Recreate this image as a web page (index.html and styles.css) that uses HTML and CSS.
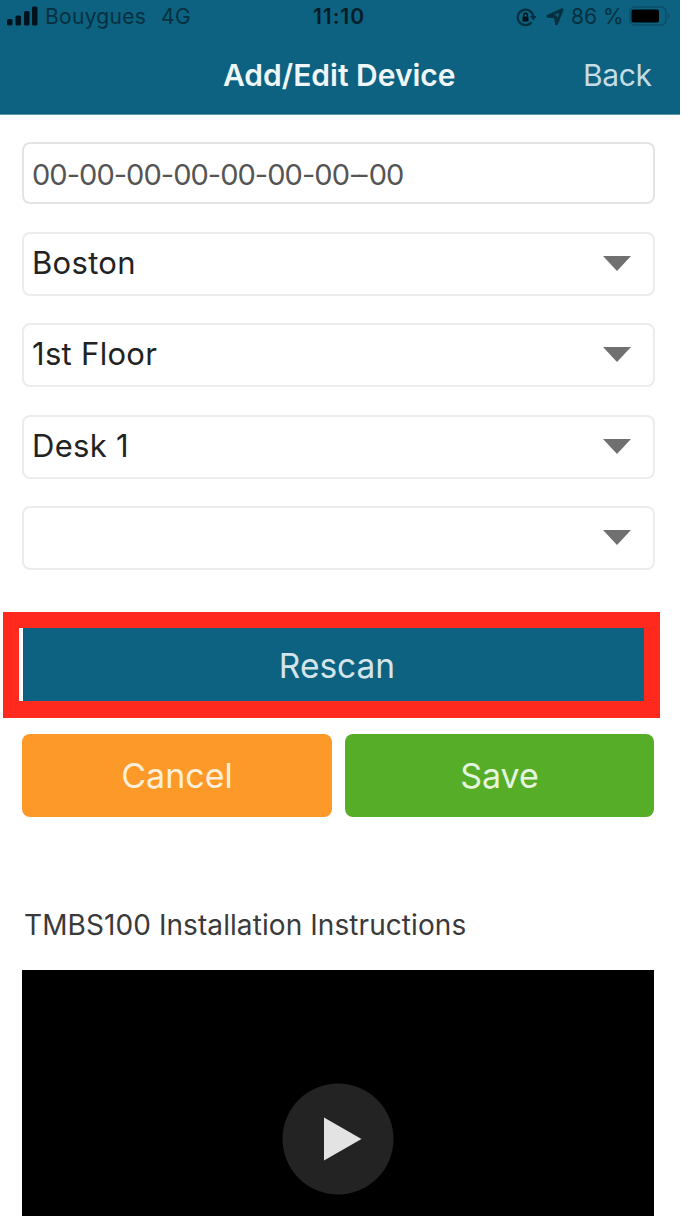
FILE: index.html
```
<!DOCTYPE html>
<html lang="en">
<head>
<meta charset="utf-8">
<title>Add/Edit Device</title>
<link rel="stylesheet" href="styles.css">
</head>
<body>
<div class="screen">
  <header class="header">
    <div class="status">
      <div class="status-left">
        <svg class="signal" width="32" height="20" viewBox="0 0 32 20"><rect x="0" y="13" width="5.5" height="6.500" rx="1.500"/><rect x="8.500" y="9.500" width="5.500" height="10" rx="1.500"/><rect x="17" y="5" width="5.500" height="14.500" rx="1.500"/><rect x="25" y="0.500" width="5.500" height="19" rx="1.500"/></svg>
        <span class="carrier">Bouygues</span>
        <span class="network">4G</span>
      </div>
      <span class="clock">11:10</span>
      <div class="status-right">
        <svg class="lock" width="21" height="20" viewBox="0 0 21 20"><path d="M15.600 15.300A7.800 7.800 0 1 1 17.300 9.500" fill="none" stroke="#06303f" stroke-width="2.200"/><path d="M14 9h6.500l-3.200 4.500z" fill="#06303f"/><path d="M6.500 9.500h6v5h-6z" fill="#021219"/><path d="M7.700 9.500V8a1.800 1.800 0 0 1 3.600 0v1.500" fill="none" stroke="#021219" stroke-width="1.400"/></svg>
        <svg class="arrow" width="18" height="18" viewBox="0 0 18 18"><path d="M2 8.200L16 1.800 10.500 15.800 9.500 8.700z" fill="none" stroke="#06303f" stroke-width="3" stroke-linejoin="round"/></svg>
        <span class="percent">86 %</span>
        <svg class="battery" width="43" height="20" viewBox="0 0 43 20"><rect x="1" y="1" width="36" height="18" rx="5" fill="none" stroke="#0a4f68" stroke-width="1.600"/><rect x="2.500" y="3.500" width="27.500" height="13" rx="2" fill="#000"/><path d="M39 7q3 3 0 6z" fill="#0a4a61"/></svg>
      </div>
    </div>
    <div class="navbar">
      <h1 class="title">Add/Edit Device</h1>
      <a class="back">Back</a>
    </div>
  </header>
  <main class="content">
    <div class="fields">
      <div class="field field-id"><span class="mac">00-00-00-00-00-00-00<span class="tight">-</span>-00</span></div>
      <div class="field"><span>Boston</span><svg class="caret" width="28" height="15" viewBox="0 0 28 15"><path d="M0 0h28L14 15z"/></svg></div>
      <div class="field"><span>1st Floor</span><svg class="caret" width="28" height="15" viewBox="0 0 28 15"><path d="M0 0h28L14 15z"/></svg></div>
      <div class="field"><span>Desk 1</span><svg class="caret" width="28" height="15" viewBox="0 0 28 15"><path d="M0 0h28L14 15z"/></svg></div>
      <div class="field"><span></span><svg class="caret" width="28" height="15" viewBox="0 0 28 15"><path d="M0 0h28L14 15z"/></svg></div>
    </div>
    <div class="highlight"><div class="button rescan"><span>Rescan</span></div></div>
    <div class="actions">
      <div class="button cancel"><span>Cancel</span></div>
      <div class="button save"><span>Save</span></div>
    </div>
    <h2 class="subtitle">TMBS100 Installation Instructions</h2>
    <div class="video">
      <svg class="play" width="112" height="112" viewBox="0 0 112 112"><circle cx="56" cy="56" r="55.500" fill="#232323"/><path d="M42 34.500L79.500 56 42 77.500z" fill="#e3e3e3"/></svg>
    </div>
  </main>
</div>
</body>
</html>
```

FILE: styles.css
```
* { box-sizing: border-box; }
body { margin: 0; background: #fff; font-family: Inter, "Liberation Sans", sans-serif; color: #222; }
svg { display: block; flex: none; }
.screen { width: 682px; height: 1222px; overflow: hidden; }
.header { width: 680px; height: 115px; background: #0c6280; border-bottom: 1px solid #5f98ab; }
.status { display: grid; grid-template-columns: 300px 78px 302px; height: 34px; align-items: center; font-size: 21px; line-height: 34px; color: #06303f; white-space: nowrap; }
.status-left, .status-right { display: flex; align-items: center; }
.status-left { padding-left: 7px; }
.signal { margin-top: -3px; margin-right: 6px; fill: #00131c; }
.carrier { width: 116px; letter-spacing: 0.3px; }
.network { letter-spacing: 0.5px; }
.clock { color: #031d28; font-weight: 600; text-align: center; letter-spacing: 1px; }
.status-right { padding-left: 138px; }
.lock { margin-right: 9px; }
.arrow { margin-right: 7px; }
.percent { width: 58px; }
.battery { margin-top: -2px; }
.navbar { display: grid; grid-template-columns: 223px 360px 97px; align-items: center; height: 81px; color: #eef6f8; white-space: nowrap; }
.title { grid-column: 2; margin: 0; font-size: 30px; line-height: 80px; font-weight: 600; }
.back { font-size: 30px; line-height: 80px; color: #c5dce4; letter-spacing: -0.4px; }
.content { padding-left: 22px; }
.fields { display: grid; grid-template-rows: 62px repeat(4, 64px); row-gap: 27.500px; width: 633px; padding-top: 27px; }
.field { display: flex; align-items: center; justify-content: space-between; padding: 0 22px 1px 8px; border: 2.500px solid #ececec; border-radius: 8px; font-size: 31px; line-height: 58px; letter-spacing: 0.3px; white-space: nowrap; }
.field > span { margin-top: -1px; }
.field-id { border-color: #e4e4e4; color: #555; }
.field > .mac { margin-top: 5px; font-size: 29px; letter-spacing: -0.960px; font-feature-settings: "calt" 0; }
.mac > .tight { letter-spacing: -6px; }
.caret { fill: #707070; }
.highlight { width: 657px; height: 106px; margin: 42px 0 0 -19px; padding-left: 4px; border: 16px solid #ff2a1d; border-bottom-width: 17px; background: #fff; }
.button { display: flex; align-items: center; justify-content: center; font-size: 34px; line-height: 40px; white-space: nowrap; }
.rescan { height: 73px; padding: 2px 0 0 7px; font-size: 33.500px; color: #d3e4ea; background: #0c6280; }
.actions { display: grid; grid-template-columns: 310px 309px; column-gap: 13px; margin-top: 16px; }
.actions .button { height: 83px; border-radius: 8px; }
.cancel { background: #fd9928; color: #ffeed8; }
.save { background: #56ad28; color: #e5f4df; }
.subtitle { margin: 88px 0 25px 2px; font-size: 28px; line-height: 40px; font-weight: 400; color: #3a3a3a; letter-spacing: 0.080px; white-space: nowrap; }
.video { display: flex; justify-content: center; width: 632px; height: 246px; padding-top: 113px; background: #000; }
```
